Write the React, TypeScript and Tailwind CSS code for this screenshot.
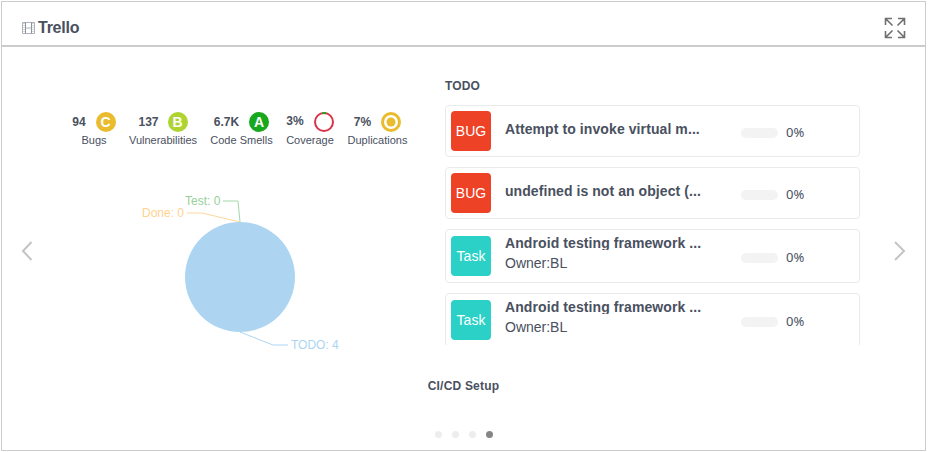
import React from "react";

const metrics = [
  { value: "94", label: "Bugs", grade: "C", color: "bg-[#eabb2c]", width: "w-11", lift: "pr-px" },
  { value: "137", label: "Vulnerabilities", grade: "B", color: "bg-[#b0d42f]", width: "w-[68px]", lift: "" },
  { value: "6.7K", label: "Code Smells", grade: "A", color: "bg-[#17a81e]", width: "w-[63px]", lift: "pr-px" },
  { value: "3%", label: "Coverage", grade: "coverage", color: "", width: "w-12", lift: "pb-[3px] pr-px" },
  { value: "7%", label: "Duplications", grade: "duplication", color: "", width: "w-[61px]", lift: "pb-px pr-px" },
];

const cards = [
  { type: "BUG", title: "Attempt to invoke virtual m...", tracking: "tracking-[0.09px]" },
  { type: "BUG", title: "undefined is not an object (...", tracking: "tracking-[0.07px]" },
  { type: "Task", title: "Android testing framework ...", owner: "Owner:BL", tracking: "tracking-[0.09px]" },
  { type: "Task", title: "Android testing framework ...", owner: "Owner:BL", tracking: "tracking-[0.09px]" },
];

function Grade({ grade, color }: { grade: string; color: string }) {
  if (grade === "coverage") {
    return (
      <svg width="20" height="20" viewBox="0 0 20 20" fill="none" strokeWidth="2">
        <circle cx="10" cy="10" r="9" stroke="#d8334a" />
        <path d="M8.4 1.15A9 9 0 0 1 12 1.22" stroke="#17a81e" />
      </svg>
    );
  }
  if (grade === "duplication") {
    return (
      <svg width="20" height="20" viewBox="0 0 20 20">
        <circle cx="10" cy="10" r="8.5" fill="none" stroke="#eabb2c" strokeWidth="3" />
        <circle cx="10" cy="10" r="4.5" fill="#eabb2c" />
      </svg>
    );
  }
  return (
    <span className={`flex size-5 items-center justify-center rounded-full text-[14px] leading-5 font-bold text-white ${color}`}>
      {grade}
    </span>
  );
}

function Arrow({ left = false }: { left?: boolean }) {
  return (
    <svg width="12" height="20" viewBox="0 0 12 20" fill="none" stroke="#c4c4c4" strokeWidth="2">
      <path d={left ? "M10.5 1L2 10L10.5 19" : "M1 1L10 10L1 19"} />
    </svg>
  );
}

export default function App() {
  return (
    <div className="h-[452px] w-[928px] bg-white pt-px pl-px font-['Liberation_Sans',Arial,sans-serif] text-[#495060]">
      <div className="flex h-[450px] w-[925px] flex-col border border-[#cccccc]">
        <header className="flex h-[45px] shrink-0 items-center justify-between border-b-2 border-[#cccccc] pt-2 pr-[19px] pl-5">
          <div className="flex items-center gap-[3px]">
            <svg width="13" height="12" viewBox="0 0 13 12" fill="none" stroke="#aeb2ba">
              <path d="M.5.5h12v11H.5z" />
              <path d="M3.5.5v11M9.5.5v11" stroke="#8b919d" />
              <path d="M3.5 6h6" />
              <path d="M2 1v10M11 1v10" strokeDasharray="1 1" />
            </svg>
            <h1 className="text-base leading-5 font-bold tracking-[-0.25px]">Trello</h1>
          </div>
          <svg width="22" height="22" viewBox="0 0 22 22" fill="none" stroke="#707070" strokeWidth="1.6">
            <path d="M1.5 8V1.5H8M1.5 1.5l7 7M14 1.5h6.5V8M20.5 1.5l-7 7M1.5 14v6.5H8M1.5 20.5l7-7M20.5 14v6.5H14M20.5 20.5l-7-7" />
          </svg>
        </header>

        <main className="flex h-[321px] shrink-0">
          <div className="flex w-[70px] shrink-0 items-start pt-[194px] pl-[19px]">
            <Arrow left />
          </div>
          <section className="w-[373px] shrink-0 pt-[65px]">
            <div className="flex gap-[13px]">
              {metrics.map((m) => (
                <div key={m.label} className={`flex shrink-0 flex-col items-center ${m.width}`}>
                  <div className="flex h-5 items-center gap-[9px] text-xs font-bold">
                    <span className={m.lift}>{m.value}</span>
                    <Grade grade={m.grade} color={m.color} />
                  </div>
                  <span className="text-[11px] leading-4 whitespace-nowrap">{m.label}</span>
                </div>
              ))}
            </div>
            <svg className="mt-8 ml-[58px] font-['Liberation_Sans',Arial,sans-serif]" width="220" height="180" viewBox="130 180 220 180" fontSize="12">
              <g fill="none" strokeWidth="1">
                <path d="M240 222L238 201H223" stroke="#a5d6a7" />
                <path d="M240 222L202 213H187" stroke="#ffd79c" />
                <path d="M240 332L273 345H288" stroke="#add5f2" />
              </g>
              <circle cx="240" cy="277" r="55" fill="#add5f2" />
              <text x="185" y="205" fill="#98d098">Test: 0</text>
              <text x="142" y="217" fill="#ffd28f">Done: 0</text>
              <text x="291" y="349" fill="#add5f2">TODO: 4</text>
            </svg>
          </section>

          <section className="w-[415px] shrink-0 pt-[31px]">
            <h2 className="text-xs leading-4 font-bold tracking-[0.1px]">TODO</h2>
            <div className="mt-[11px] flex h-[240px] flex-col gap-[10px] overflow-hidden">
              {cards.map((card, i) => (
                <article key={i} className={`flex shrink-0 items-center rounded border border-[#e9eaec] pl-[5px] ${card.owner ? "h-[54px]" : "h-[52px]"}`}>
                  <span className={`flex size-10 shrink-0 items-center justify-center rounded text-sm text-white ${card.owner ? "bg-[#2bd1c7]" : "bg-[#ed4226]"}`}>
                    {card.type}
                  </span>
                  <div className={`ml-[14px] w-[236px] shrink-0 text-sm leading-5 whitespace-nowrap ${card.owner ? "pb-1" : "pb-1"}`}>
                    <h3 className={`font-bold ${card.tracking} ${card.owner ? "mb-[3px] h-[14px] overflow-hidden leading-[14px]" : ""}`}>{card.title}</h3>
                    {card.owner && <p>{card.owner}</p>}
                  </div>
                  <span className="mt-1 h-[10px] w-[37px] shrink-0 rounded-full bg-[#f3f3f3]" />
                  <span className="mt-px ml-2 font-['Noto_Sans',sans-serif] text-[13px] leading-5 tracking-[0.15px]">0%</span>
                </article>
              ))}
            </div>
          </section>
          <div className="flex flex-1 items-start pt-[194px] pl-[34px]">
            <Arrow />
          </div>
        </main>
        <footer className="flex flex-col items-center pt-[10px]">
          <h2 className="text-xs leading-4 font-bold tracking-[0.2px]">CI/CD Setup</h2>
          <div className="mt-[37px] flex gap-[10px]">
            <span className="size-[7px] rounded-full bg-[#ededed]" />
            <span className="size-[7px] rounded-full bg-[#ededed]" />
            <span className="size-[7px] rounded-full bg-[#ededed]" />
            <span className="size-[7px] rounded-full bg-[#858585]" />
          </div>
        </footer>
      </div>
    </div>
  );
}
